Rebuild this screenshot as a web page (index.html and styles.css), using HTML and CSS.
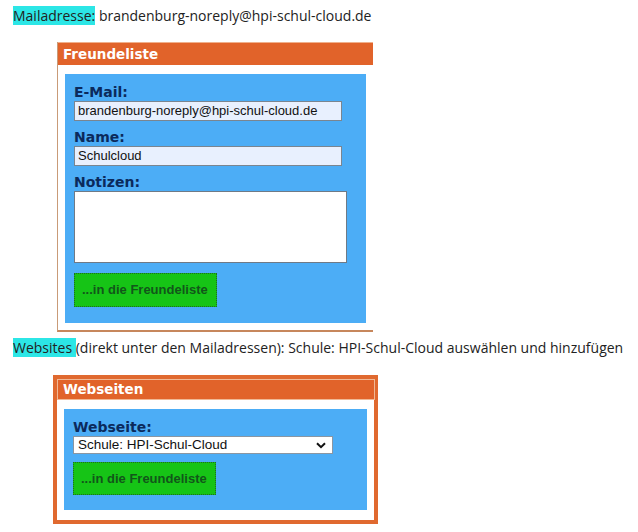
FILE: index.html
```html
<!DOCTYPE html>
<html lang="de">
<head>
<meta charset="utf-8">
<title>Freundeliste</title>
<link rel="stylesheet" href="styles.css">
</head>
<body>
<p class="line line-first"><span class="hl">Mailadresse:</span> brandenburg-noreply@hpi-schul-cloud.de</p>

<div class="box box-friends">
  <div class="box-head">Freundeliste</div>
  <div class="panel">
    <label class="lbl">E-Mail:</label>
    <div class="field field-auto">brandenburg-noreply@hpi-schul-cloud.de</div>
    <label class="lbl">Name:</label>
    <div class="field field-auto">Schulcloud</div>
    <label class="lbl">Notizen:</label>
    <div class="notes"></div>
    <div class="btn">...in die Freundeliste</div>
  </div>
</div>

<p class="line line-second"><span class="hl">Websites </span>(direkt unter den Mailadressen): Schule: HPI-Schul-Cloud auswählen und hinzufügen</p>

<div class="box box-sites">
  <div class="box-head">Webseiten</div>
  <div class="panel panel-sites">
    <label class="lbl">Webseite:</label>
    <div class="select"><span>Schule: HPI-Schul-Cloud</span>
      <svg class="chev" width="10" height="7" viewBox="0 0 10 7"><path d="M1 1.2 L5 5.2 L9 1.2" fill="none" stroke="#111" stroke-width="2"/></svg>
    </div>
    <div class="btn">...in die Freundeliste</div>
  </div>
</div>
</body>
</html>
```

FILE: styles.css
```css
html, body {
  margin: 0;
  padding: 0;
  background: #fff;
}
body {
  width: 638px;
  height: 532px;
  overflow: hidden;
  font-family: "Open Sans", "Liberation Sans", sans-serif;
  color: #222;
}
.line {
  margin: 0;
  font-size: 14px;
  line-height: 18px;
  padding-left: 13px;
  white-space: nowrap;
}
.line-first {
  padding-top: 7px;
}
.line-second {
  margin-top: 7px;
}
.hl {
  background: #2ce6e6;
}
.box {
  margin-left: 57px;
  width: 316px;
  box-sizing: border-box;
}
.box-friends {
  margin-top: 17px;
  border-left: 1px solid #c99b78;
  border-bottom: 2px solid #c7875c;
  padding-bottom: 7px;
}
.box-sites {
  margin-top: 18px;
  margin-left: 53px;
  width: 325px;
  border: 4px solid #e0692f;
  border-top-width: 5px;
  padding: 0 0 10px 1px;
}
.box-head {
  background: #e1632a;
  color: #fff;
  font-family: "DejaVu Sans", Verdana, sans-serif;
  font-weight: bold;
  font-size: 13.5px;
  line-height: 22px;
  height: 22px;
  padding-left: 5px;
  border-top: 1px solid #f0b08c;
}
.box-sites .box-head {
  height: 19px;
  line-height: 19px;
  border-top: none;
  outline: 1px solid #f0b895;
}
.panel {
  background: #4cadf6;
  margin: 9px 7px 0 7px;
  padding: 11px 9px 16px 9px;
  display: flex;
  flex-direction: column;
  align-items: flex-start;
}
.box-sites .panel {
  margin: 10px 7px 0 6px;
  padding-bottom: 15px;
}
.lbl {
  font-family: "DejaVu Sans", Verdana, sans-serif;
  font-weight: bold;
  font-size: 14px;
  line-height: 15px;
  color: #0b2a5c;
  margin-bottom: 1px;
}
.field {
  box-sizing: border-box;
  width: 268px;
  height: 20px;
  border: 1px solid #7a8590;
  font-family: "Liberation Sans", Arial, sans-serif;
  font-size: 13px;
  line-height: 18px;
  padding-left: 3px;
  color: #111;
  margin-bottom: 9px;
}
.field-auto {
  background: #e8f0fe;
}
.notes {
  box-sizing: border-box;
  width: 273px;
  height: 72px;
  background: #fff;
  border: 1px solid #6f7a86;
  margin-bottom: 10px;
}
.btn {
  box-sizing: border-box;
  width: 143px;
  height: 34px;
  background: #16c416;
  border: 1px dotted #1f6a1f;
  font-family: "Liberation Sans", Arial, sans-serif;
  font-weight: bold;
  font-size: 13px;
  line-height: 32px;
  color: #12561a;
  padding-left: 7px;
}
.box-sites .btn {
  height: 33px;
}
.select {
  box-sizing: border-box;
  width: 260px;
  height: 18px;
  background: #fff;
  border: 1px solid #8a96a2;
  font-family: "Liberation Sans", Arial, sans-serif;
  font-size: 13.5px;
  line-height: 16px;
  color: #111;
  padding: 0 6px 0 4px;
  display: flex;
  align-items: center;
  justify-content: space-between;
  margin-bottom: 8px;
}
.chev {
  display: block;
}
```
